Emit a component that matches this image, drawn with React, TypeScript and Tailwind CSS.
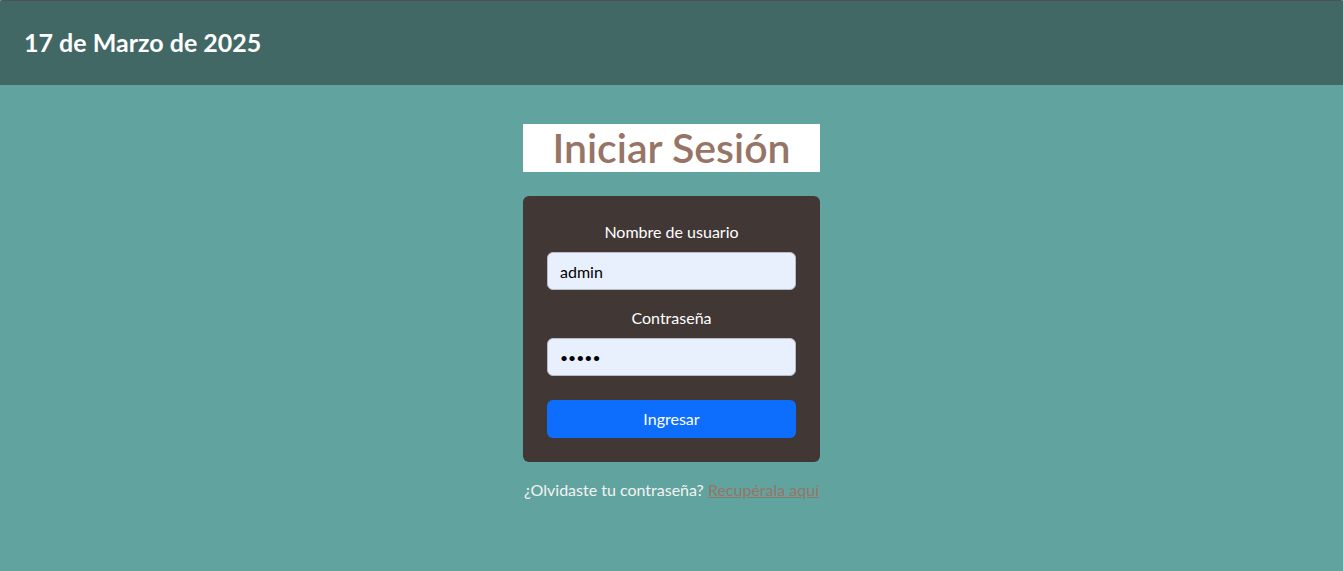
import React from "react";

export default function App() {
  return (
    <div className="min-h-[571px] bg-[#61a49f] font-['Lato','Noto_Sans',sans-serif]">
      {/* Cabecera */}
      <header className="flex h-[85px] items-center rounded-t-[3px] border-t border-[#4d5257] bg-[#426866] px-6">
        <h1 className="text-[25px] font-bold text-white">17 de Marzo de 2025</h1>
      </header>

      <main className="flex flex-col items-center pt-[39px]">
        <div className="flex h-[48px] w-[297px] items-center justify-center bg-white">
          <h2 className="text-[41px] font-semibold leading-[48px] text-[#977566]">Iniciar Sesión</h2>
        </div>

        <form
          className="mt-6 w-[297px] rounded-md bg-[#413836] p-6"
          onSubmit={(e) => e.preventDefault()}
        >
          <label className="block text-center text-base leading-6 text-white">Nombre de usuario</label>
          <input
            type="text"
            defaultValue="admin"
            className="mt-2 block h-[38px] w-full rounded-md border border-[#b8bcc2] bg-[#e8f0fe] px-3 text-base text-black outline-none"
          />

          <label className="mt-4 block text-center text-base leading-6 text-white">Contraseña</label>
          <input
            type="password"
            defaultValue="admin"
            className="mt-2 block h-[38px] w-full rounded-md border border-[#b8bcc2] bg-[#e8f0fe] px-3 text-[14px] text-black outline-none"
          />

          <button
            type="submit"
            className="mt-6 block h-[38px] w-full rounded-md bg-[#0d6efd] text-base text-white"
          >
            Ingresar
          </button>
        </form>

        <p className="mt-4 text-base leading-6 text-[#f3f3f3]">
          ¿Olvidaste tu contraseña?{" "}
          <a href="#" className="text-[#977566] underline">
            Recupérala aquí
          </a>
        </p>
      </main>
    </div>
  );
}
